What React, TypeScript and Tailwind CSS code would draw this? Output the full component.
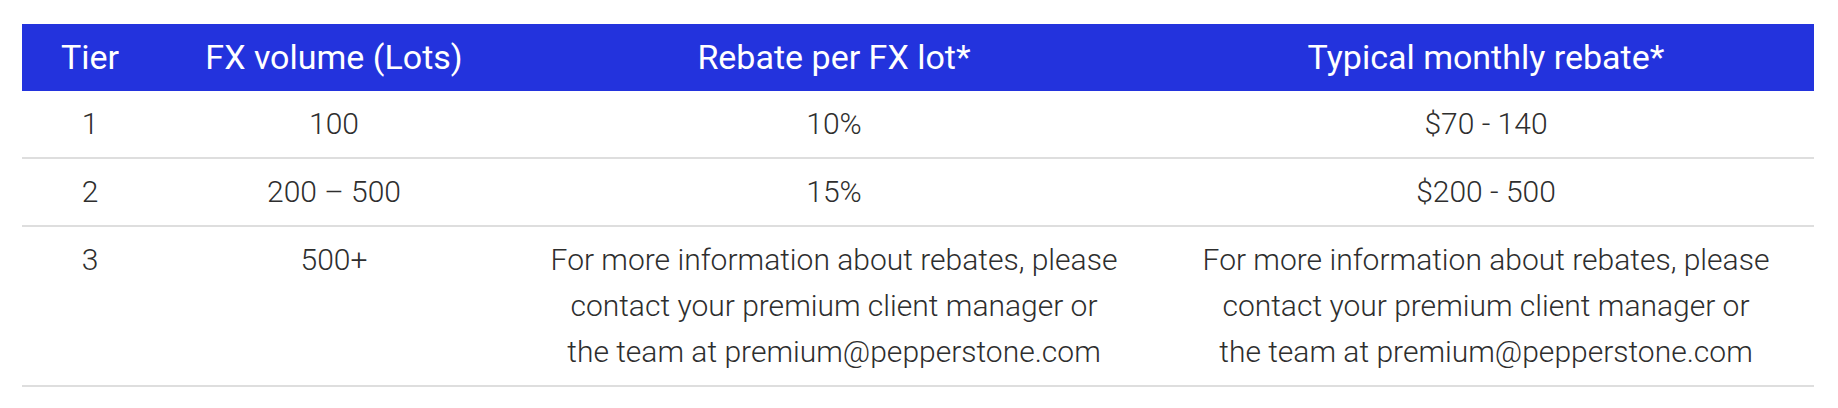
import React from "react";

interface Row {
  tier: string;
  volume: string;
  rebate: React.ReactNode;
  monthly: React.ReactNode;
}

const contactNote = (
  <>
    For more information about rebates, please
    <br />
    contact your premium client manager or
    <br />
    the team at premium@pepperstone.com
  </>
);

const rows: Row[] = [
  { tier: "1", volume: "100", rebate: "10%", monthly: "$70 - 140" },
  { tier: "2", volume: "200 – 500", rebate: "15%", monthly: "$200 - 500" },
  { tier: "3", volume: "500+", rebate: contactNote, monthly: contactNote },
];

export default function App() {
  return (
    <div className="w-[1838px] h-[408px] bg-white pt-[24px] pl-[22px]">
      <table className="w-[1792px] table-fixed border-collapse text-center">
        <colgroup>
          <col className="w-[136px]" />
          <col className="w-[352px]" />
          <col className="w-[648px]" />
          <col className="w-[656px]" />
        </colgroup>
        <thead>
          <tr className="bg-[#2333dd] h-[67px]">
            {["Tier", "FX volume (Lots)", "Rebate per FX lot*", "Typical monthly rebate*"].map((h) => (
              <th
                key={h}
                className="p-0 font-normal text-white text-[34px] font-['Roboto',sans-serif] align-middle"
              >
                {h}
              </th>
            ))}
          </tr>
        </thead>
        <tbody className="font-['Roboto',sans-serif] font-light text-[30px] leading-[46px] text-[#2e2e2e]">
          {rows.map((r) => (
            <tr key={r.tier} className="border-b-2 border-[#dedede]">
              <td className="py-[10px] px-0 align-top">{r.tier}</td>
              <td className="py-[10px] px-0 align-top">{r.volume}</td>
              <td className="py-[10px] px-0 align-top">{r.rebate}</td>
              <td className="py-[10px] px-0 align-top">{r.monthly}</td>
            </tr>
          ))}
        </tbody>
      </table>
    </div>
  );
}
